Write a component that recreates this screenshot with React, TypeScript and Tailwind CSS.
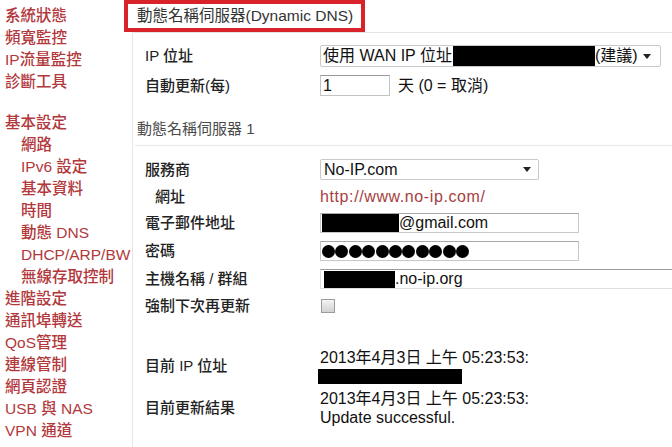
import React from "react"

const menuTop = ["系統狀態", "頻寬監控", "IP流量監控", "診斷工具"]

const menuMain: { label: string; sub?: boolean }[] = [
  { label: "基本設定" },
  { label: "網路", sub: true },
  { label: "IPv6 設定", sub: true },
  { label: "基本資料", sub: true },
  { label: "時間", sub: true },
  { label: "動態 DNS", sub: true },
  { label: "DHCP/ARP/BW", sub: true },
  { label: "無線存取控制", sub: true },
  { label: "進階設定" },
  { label: "通訊埠轉送" },
  { label: "QoS管理" },
  { label: "連線管制" },
  { label: "網頁認證" },
  { label: "USB 與 NAS" },
  { label: "VPN 通道" },
]

function Caret() {
  return <div className="h-0 w-0 border-l-[4px] border-r-[4px] border-t-[5px] border-l-transparent border-r-transparent border-t-[#222]" />
}

function Row({ label, indent, className, children }: { label: string; indent?: boolean; className: string; children: React.ReactNode }) {
  return (
    <div className={`flex items-center ${className}`}>
      <div className={`w-[187px] shrink-0 text-[15px] font-medium leading-[20px] text-[#222] ${indent ? "pl-[22px]" : "pl-[12px]"}`}>{label}</div>
      <div className="flex-1">{children}</div>
    </div>
  )
}

export default function App() {
  return (
    <div className="flex w-[672px] h-[447px] overflow-hidden bg-white font-['Liberation_Sans','Noto_Sans_CJK_TC',sans-serif]">
      {/* Sidebar */}
      <div className="w-[124px] shrink-0 pt-[5px] text-[15.5px] font-medium leading-[22px] text-[#b2383c] whitespace-nowrap">
        {menuTop.map(m => (
          <div key={m} className="pl-[5px]">{m}</div>
        ))}
        <div className="mt-[19px]">
          {menuMain.map(m => (
            <div key={m.label} className={m.sub ? "pl-[21px]" : "pl-[5px]"}>{m.label}</div>
          ))}
        </div>
      </div>

      {/* Main */}
      <div className="flex-1 min-w-0">
        <div className="relative z-10 flex h-[32px] w-[241px] items-center border-[4px] border-[#d9232b] bg-white pl-[9px] text-[15.5px] text-[#333] whitespace-nowrap">
          動態名稱伺服器(Dynamic DNS)
        </div>

        <div className="ml-[8px] border-l border-t border-[#e6e6e6] pb-[40px]">
          <Row label="IP 位址" className="mt-[12px] h-[22px]">
            <div className="flex h-[22px] w-[341px] items-center rounded-[2px] border border-[#c9c9c9] bg-white pl-[2px] pr-[9px] text-[16px] text-[#111] whitespace-nowrap">
              <span>使用 WAN IP 位址</span>
              <span className="ml-[1px] h-[20px] w-[142px] bg-black" />
              <span className="flex-1">(建議)</span>
              <Caret />
            </div>
          </Row>

          <Row label="自動更新(每)" className="mt-[8px] h-[21px]">
            <div className="flex items-center text-[16px] text-[#111]">
              <div className="flex h-[21px] w-[70px] items-center border border-[#c4c4c4] border-t-[#9a9a9a] pl-[2px]">1</div>
              <span className="ml-[8px]">天 (0 = 取消)</span>
            </div>
          </Row>

          <div className="ml-[2px] mt-[23px] border-b border-[#e8e8e8] pb-[6px] pl-[2px] text-[15px] leading-[20px] text-[#4a4a4a]">
            動態名稱伺服器 1
          </div>

          <Row label="服務商" className="mt-[13px] h-[21px]">
            <div className="flex h-[21px] w-[219px] items-center rounded-[2px] border border-[#c9c9c9] bg-white pl-[3px] pr-[7px] text-[16px] text-[#111]">
              <span className="flex-1">No-IP.com</span>
              <Caret />
            </div>
          </Row>

          <Row label="網址" indent className="mt-[7px] h-[20px]">
            <span className="text-[16px] tracking-[0.6px] text-[#a6403f]">http://www.no-ip.com/</span>
          </Row>

          <Row label="電子郵件地址" className="mt-[6px] h-[20px]">
            <div className="flex h-[20px] w-[259px] items-center border border-[#c8c8c8] border-t-[#a8a8a8] pl-[1px] text-[16px] text-[#111]">
              <span className="h-[18px] w-[77px] bg-black" />
              <span>@gmail.com</span>
            </div>
          </Row>

          <Row label="密碼" className="mt-[8px] h-[20px]">
            <div className="flex h-[20px] w-[259px] items-center gap-[0.4px] border border-[#c8c8c8] border-t-[#a8a8a8] pl-[1px]">
              {Array.from({ length: 11 }).map((_, i) => (
                <span key={i} className="h-[13px] w-[13px] rounded-full bg-black" />
              ))}
            </div>
          </Row>

          <Row label="主機名稱 / 群組" className="mt-[8px] h-[20px]">
            <div className="flex h-[20px] w-[370px] items-center border border-[#dedede] border-t-[#9a9a9a] pl-[3px] text-[16px] text-[#111]">
              <span className="h-[17px] w-[71px] bg-black" />
              <span>.no-ip.org</span>
            </div>
          </Row>

          <Row label="強制下次再更新" className="mt-[10px] h-[14px]">
            <div className="ml-[1px] h-[14px] w-[14px] border border-[#9c9c9c] bg-gradient-to-b from-[#f4f4f4] to-[#d2d2d2]" />
          </Row>

          <Row label="目前 IP 位址" className="mt-[35px] h-[36px]">
            <div className="text-[16px] leading-[20px] text-[#111] whitespace-nowrap">
              <div>2013年4月3日 上午 05:23:53:</div>
              <div className="ml-[-2px] mt-px h-[15px] w-[144px] bg-black" />
            </div>
          </Row>

          <Row label="目前更新結果" className="mt-[5px] h-[38px]">
            <div className="text-[16px] leading-[19px] text-[#111] whitespace-nowrap">
              <div>2013年4月3日 上午 05:23:53:</div>
              <div>Update successful.</div>
            </div>
          </Row>
        </div>
      </div>
    </div>
  )
}
